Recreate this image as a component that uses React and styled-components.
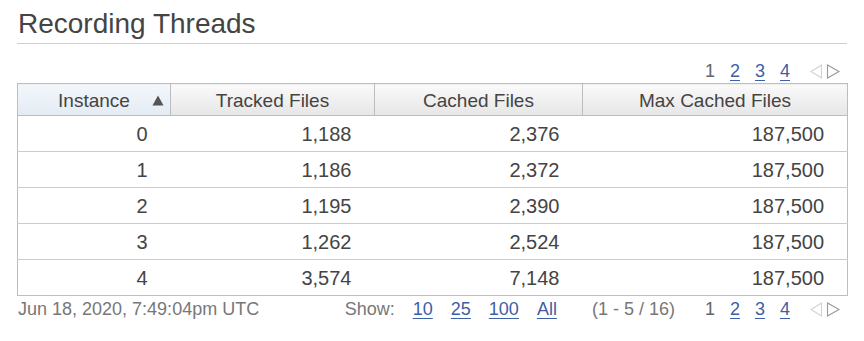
import React from "react";
import styled, { createGlobalStyle } from "styled-components";

const Global = createGlobalStyle`
  html, body { margin: 0; padding: 0; background: #fff; }
  body { font-family: "Liberation Sans", Arial, sans-serif; }
`;

const Page = styled.div`
  padding: 0 17px;
  width: 830px;
`;

const Title = styled.h1`
  margin: 0;
  padding: 8px 1px 3px;
  font-size: 28px;
  line-height: 32px;
  font-weight: 400;
  color: #444;
  border-bottom: 1px solid #cfcfcf;
`;

const PagerBar = styled.div`
  display: flex;
  justify-content: flex-end;
  padding: 0 5px 0 0;
  margin: 17px 0 2px;
`;

const Pager = styled.div`
  display: flex;
  align-items: center;
  gap: 15px;
  font-size: 18px;
  line-height: 20px;
  color: #666;
`;

const PageLink = styled.a`
  color: #3d5fa6;
  text-decoration: underline;
  text-underline-offset: 3px;
  cursor: pointer;
`;

const Current = styled.span`
  color: #666;
`;

const Arrows = styled.svg`
  margin-left: 5px;
  display: block;
`;

const Table = styled.table`
  width: 830px;
  border-collapse: collapse;
  border: 1px solid #bdbdbd;
  table-layout: fixed;
`;

const Th = styled.th`
  position: relative;
  height: 32px;
  padding: 2px 0 0;
  box-sizing: border-box;
  font-size: 19px;
  line-height: 28px;
  font-weight: 400;
  color: #444;
  text-align: center;
  border: 1px solid #bdbdbd;
  background: ${(p) =>
    p.$sorted
      ? "linear-gradient(#f3f7fb, #e3ebf3)"
      : "linear-gradient(#fafafa, #e6e6e6)"};
`;

const SortArrow = styled.svg`
  position: absolute;
  right: 6px;
  top: 11px;
  display: block;
`;

const Td = styled.td`
  height: 36px;
  padding: 2px 23px 0 0;
  box-sizing: border-box;
  font-size: 20px;
  line-height: 23px;
  color: #444;
  text-align: right;
  border-top: 1px solid #cccccc;
`;

const Footer = styled.div`
  display: flex;
  align-items: center;
  margin-top: 3px;
  padding: 0 5px 0 1px;
  font-size: 18px;
  line-height: 20px;
  color: #777;
`;

const Stamp = styled.span`
  flex: 1;
`;

const ShowGroup = styled.div`
  display: flex;
  gap: 18px;
  & > span:first-child {
    margin-right: 0;
  }
`;

const Range = styled.span`
  margin: 0 30px 0 35px;
`;

const columns = [
  { label: "Instance", width: 153, sorted: true },
  { label: "Tracked Files", width: 204 },
  { label: "Cached Files", width: 208 },
  { label: "Max Cached Files", width: 265 },
];

const rows = [
  [0, "1,188", "2,376", "187,500"],
  [1, "1,186", "2,372", "187,500"],
  [2, "1,195", "2,390", "187,500"],
  [3, "1,262", "2,524", "187,500"],
  [4, "3,574", "7,148", "187,500"],
];

function PageNav() {
  return (
    <Pager>
      <Current>1</Current>
      <PageLink>2</PageLink>
      <PageLink>3</PageLink>
      <PageLink>4</PageLink>
      <Arrows width="32" height="15" viewBox="0 0 32 15">
        <polygon points="11.5,1 11.5,14 1,7.5" fill="none" stroke="#d2d2d2" strokeWidth="1.1" />
        <polygon points="17.5,1 17.5,14 29,7.5" fill="none" stroke="#9a9a9a" strokeWidth="1.1" />
      </Arrows>
    </Pager>
  );
}

export default function App() {
  return (
    <>
      <Global />
      <Page>
        <Title>Recording Threads</Title>
        <PagerBar>
          <PageNav />
        </PagerBar>
        <Table>
          <colgroup>
            {columns.map((c) => (
              <col key={c.label} style={{ width: c.width }} />
            ))}
          </colgroup>
          <thead>
            <tr>
              {columns.map((c) => (
                <Th key={c.label} $sorted={c.sorted}>
                  {c.label}
                  {c.sorted && (
                    <SortArrow width="12" height="11" viewBox="0 0 12 11">
                      <polygon points="6,0.5 11.5,10.5 0.5,10.5" fill="#555" />
                    </SortArrow>
                  )}
                </Th>
              ))}
            </tr>
          </thead>
          <tbody>
            {rows.map((r) => (
              <tr key={r[0]}>
                {r.map((v, i) => (
                  <Td key={i}>{v}</Td>
                ))}
              </tr>
            ))}
          </tbody>
        </Table>
        <Footer>
          <Stamp>Jun 18, 2020, 7:49:04pm UTC</Stamp>
          <ShowGroup>
            <span>Show:</span>
            <PageLink>10</PageLink>
            <PageLink>25</PageLink>
            <PageLink>100</PageLink>
            <PageLink>All</PageLink>
          </ShowGroup>
          <Range>(1 - 5 / 16)</Range>
          <PageNav />
        </Footer>
      </Page>
    </>
  );
}
